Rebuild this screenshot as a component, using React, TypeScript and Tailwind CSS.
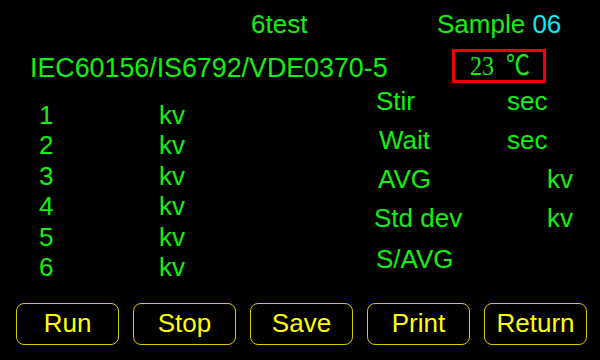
import React from "react";

const readings = ["1", "2", "3", "4", "5", "6"];

const stats = [
	{ label: "Stir", unit: "sec", pad: "pl-[376px]", labelW: "w-[131px]", extra: "" },
	{ label: "Wait", unit: "sec", pad: "pl-[379px]", labelW: "w-[128px]", extra: "" },
	{ label: "AVG", unit: "kv", pad: "pl-[378px]", labelW: "w-[169px]", extra: "" },
	{ label: "Std dev", unit: "kv", pad: "pl-[374px]", labelW: "w-[173px]", extra: "" },
	{ label: "S/AVG", unit: "", pad: "pl-[376px]", labelW: "w-[131px]", extra: "mt-[2px]" },
];

const buttons = ["Run", "Stop", "Save", "Print", "Return"];

const App: React.FC = () => {
	return (
		<div className="w-[600px] h-[360px] bg-black text-[#11f011] text-[26px] leading-[30px] font-['Liberation_Sans',Arial,sans-serif] overflow-hidden flex flex-col">
			{/* header */}
			<div className="flex pt-[9px] pl-[251px] h-[39px]">
				<span className="w-[186px]">6test</span>
				<span>
					Sample <span className="text-[#00eeff]">06</span>
				</span>
			</div>

			<div className="flex h-[34px] mt-[10px]">
				<span className="pl-[30px] w-[452px] mt-[4px] text-[26.8px]">IEC60156/IS6792/VDE0370-5</span>
				<div className="w-[94px] h-[34px] border-[3px] border-[#f00000] flex items-center justify-center text-[24px] font-['Liberation_Serif','Noto_Sans_CJK_SC',serif]">
					<span className="inline-block scale-y-[1.15] pl-[2px]">
						23<span className="ml-[12px]">℃</span>
					</span>
				</div>
			</div>

			{/* body */}
			<div className="relative flex-1">
				<div className="absolute left-0 top-0 pt-[17px] flex flex-col">
					{readings.map((n) => (
						<div key={n} className="flex h-[30.4px] leading-[30px]">
							<span className="pl-[39px] w-[159px]">{n}</span>
							<span>kv</span>
						</div>
					))}
				</div>
				<div className="absolute left-0 top-0 pt-[3px] flex flex-col">
					{stats.map((s) => (
						<div key={s.label} className={`flex h-[39px] ${s.pad} ${s.extra}`}>
							<span className={s.labelW}>{s.label}</span>
							<span>{s.unit}</span>
						</div>
					))}
				</div>
			</div>

			{/* buttons */}
			<div className="flex justify-between pl-[16px] pr-[13px] mb-[15px]">
				{buttons.map((b) => (
					<div
						key={b}
						className="w-[103px] h-[42px] border border-[#d8c800] rounded-[8px] flex items-center justify-center text-[#ffff00] pb-[2px]"
					>
						{b}
					</div>
				))}
			</div>
		</div>
	);
};

export default App;
